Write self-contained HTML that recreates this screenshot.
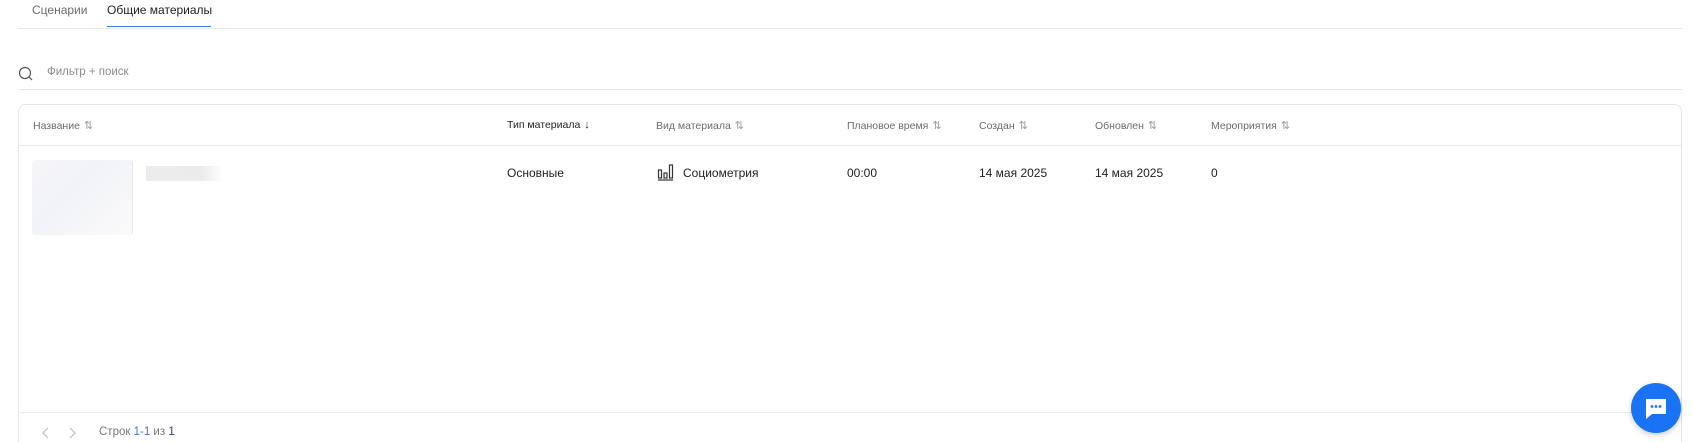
<!DOCTYPE html>
<html style="overflow:hidden;height:442px"><head><meta charset="utf-8"><style>
body{margin:0;width:1693px;height:442px;background:#fff;font-family:"Liberation Sans",sans-serif;position:relative;overflow:hidden;color:#1f1f1f}
.a{position:absolute;white-space:nowrap}
.h{font-size:10.5px;color:#6b6b6b;top:119px}
.r{font-size:12px;color:#222;top:166px}
.s{color:#9a9a9a;font-size:11px;margin-left:4px}
</style></head><body>
<div class="a" style="left:32px;top:3px;font-size:12px;color:#6b6b6b">Сценарии</div>
<div class="a" style="left:107px;top:3px;font-size:12px;color:#222">Общие материалы</div>
<div class="a" style="left:107px;top:26px;width:104px;height:1px;background:#3b7ae0"></div>
<div class="a" style="left:18px;top:28px;width:1664px;height:1px;background:#e8e8e8"></div>
<svg class="a" style="left:18px;top:66px" width="16" height="16" viewBox="0 0 16 16"><circle cx="7" cy="7" r="5.5" fill="none" stroke="#555" stroke-width="1.2"/><path d="M11 11l3 3" stroke="#555" stroke-width="1.2"/></svg>
<div class="a" style="left:47px;top:66px;font-size:11.5px;color:#8c8c8c">Фильтр + поиск</div>
<div class="a" style="left:18px;top:89px;width:1664px;height:1px;background:#e8e8e8"></div>
<div class="a" style="left:18px;top:104px;width:1662px;height:345px;border:1px solid #e6e6e6;border-radius:8px"></div>
<div class="a" style="left:19px;top:145px;width:1662px;height:1px;background:#ebebeb"></div>
<div class="a" style="left:19px;top:412px;width:1662px;height:1px;background:#ebebeb"></div>
<div class="a h" style="left:33px">Название<span class="s">⇅</span></div>
<div class="a h" style="left:507px;color:#222">Тип материала<span class="s" style="color:#222">↓</span></div>
<div class="a h" style="left:656px">Вид материала<span class="s">⇅</span></div>
<div class="a h" style="left:847px">Плановое время<span class="s">⇅</span></div>
<div class="a h" style="left:979px">Создан<span class="s">⇅</span></div>
<div class="a h" style="left:1095px">Обновлен<span class="s">⇅</span></div>
<div class="a h" style="left:1211px">Мероприятия<span class="s">⇅</span></div>
<div class="a" style="left:32px;top:160px;width:100px;height:75px;border-radius:3px;border-right:1px solid #e8e8e8;background:linear-gradient(135deg,#f6f6f8,#f2f3f8 40%,#fafafa)"></div>
<div class="a" style="left:146px;top:166px;width:78px;height:15px;background:linear-gradient(90deg,#ececec,#ebebeb 70%,#fff)"></div>
<div class="a r" style="left:507px">Основные</div>
<svg class="a" style="left:657px;top:164px" width="17" height="17" viewBox="0 0 17 17"><g fill="none" stroke="#333" stroke-width="1.2"><rect x="1.5" y="6" width="3" height="8"/><rect x="7" y="9" width="3" height="5"/><rect x="12.5" y="1" width="3" height="13"/><path d="M1 16h15"/></g></svg>
<div class="a r" style="left:683px">Социометрия</div>
<div class="a r" style="left:847px">00:00</div>
<div class="a r" style="left:979px">14 мая 2025</div>
<div class="a r" style="left:1095px">14 мая 2025</div>
<div class="a r" style="left:1211px">0</div>
<svg class="a" style="left:41px;top:426px" width="10" height="14" viewBox="0 0 10 14"><path d="M7 2L2 7l5 5" fill="none" stroke="#bbb" stroke-width="1.2"/></svg>
<svg class="a" style="left:67px;top:426px" width="10" height="14" viewBox="0 0 10 14"><path d="M3 2l5 5-5 5" fill="none" stroke="#bbb" stroke-width="1.2"/></svg>
<div class="a" style="left:99px;top:426px;font-size:11.5px;color:#777">Строк <span style="color:#4a6fe0">1-1</span> из <span style="color:#1f3f8f">1</span></div>
<div class="a" style="left:1631px;top:383px;width:50px;height:50px;border-radius:50%;background:#1a73f5;box-shadow:0 2px 6px rgba(0,0,0,.2)"></div>
<svg class="a" style="left:1643px;top:396px" width="26" height="26" viewBox="0 0 26 26"><path d="M3 3h20v15H9l-6 5z" fill="#fff"/><circle cx="9" cy="10.5" r="1.4" fill="#1a73f5"/><circle cx="13" cy="10.5" r="1.4" fill="#1a73f5"/><circle cx="17" cy="10.5" r="1.4" fill="#1a73f5"/></svg>
</body></html>
